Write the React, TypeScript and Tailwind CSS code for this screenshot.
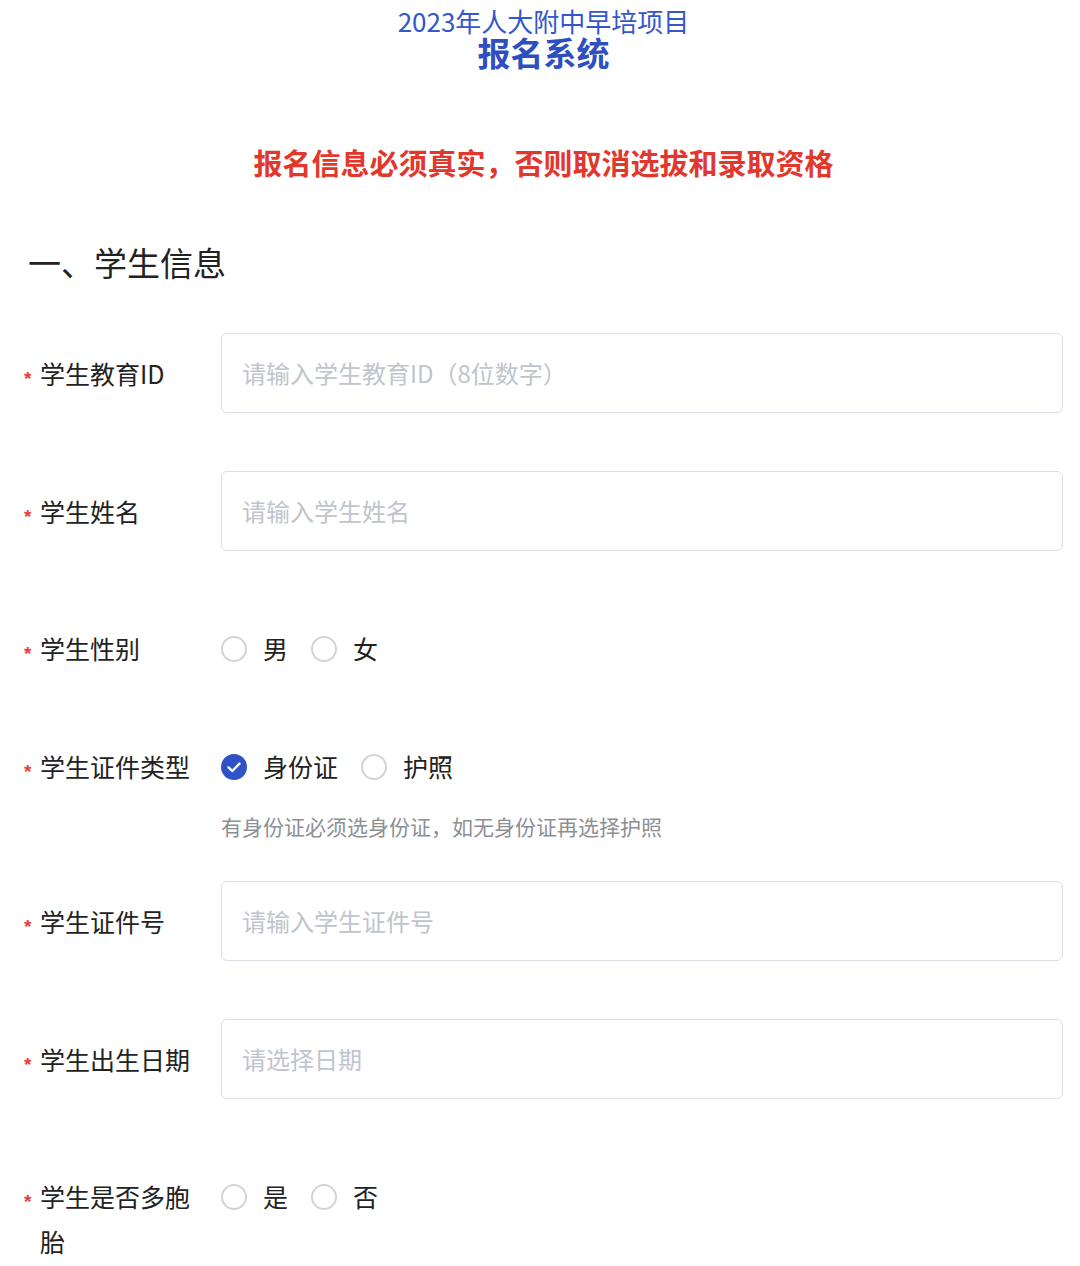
import React from "react";

const font = { fontFamily: '"Noto Sans CJK SC", "Noto Sans", sans-serif' };

function Star() {
  return (
    <span
      style={{ fontFamily: '"Liberation Sans", sans-serif' }}
      className="w-[16px] h-[45px] shrink-0 flex items-center text-[19px] font-bold text-[#e5403a] leading-none"
    >
      <span className="translate-y-[5px]">*</span>
    </span>
  );
}

function Label({ text }: { text: string }) {
  return (
    <div className="flex items-start shrink-0">
      <Star />
      <div className="w-[160px] mr-[21px] text-[25px] leading-[45px] text-[#222]">{text}</div>
    </div>
  );
}

function InputRow({ label, placeholder, mt }: { label: string; placeholder: string; mt: string }) {
  return (
    <div className={`flex items-center ${mt}`}>
      <Label text={label} />
      <div className="flex-1 h-[80px] border border-[#dcdfe6] rounded-[6px] flex items-center pl-[20px] text-[24px] text-[#c0c4cc]">
        {placeholder}
      </div>
    </div>
  );
}

function Radio({ label, checked }: { label: string; checked?: boolean }) {
  return (
    <div className="flex items-center mr-[23px]">
      {checked ? (
        <svg width="26" height="26" viewBox="0 0 26 26">
          <circle cx="13" cy="13" r="13" fill="#2f52c6" />
          <path d="M7.5 13.4l3.8 3.6 7.2-7.4" fill="none" stroke="#fff" strokeWidth="2.4" strokeLinecap="round" strokeLinejoin="round" />
        </svg>
      ) : (
        <span className="w-[26px] h-[26px] rounded-full border-[2px] border-[#d4d4d6] box-border" />
      )}
      <span className="ml-[16px] text-[25px] leading-[45px] text-[#222]">{label}</span>
    </div>
  );
}

function RadioRow({ label, options, mt }: { label: string; options: { t: string; c?: boolean }[]; mt: string }) {
  return (
    <div className={`flex items-start ${mt}`}>
      <Label text={label} />
      <div className="flex items-center h-[45px]">
        {options.map((o) => (
          <Radio key={o.t} label={o.t} checked={o.c} />
        ))}
      </div>
    </div>
  );
}

export default function App() {
  return (
    <div style={font} className="w-[1080px] h-[1266px] bg-white overflow-hidden pl-[24px] pr-[17px]">
      <div className="pt-[7px] text-center">
        <div className="text-[26px] leading-[28px] text-[#3457c9]">2023年人大附中早培项目</div>
        <div className="mt-[1px] text-[33px] leading-[32px] font-bold text-[#2d4fbf]">报名系统</div>
      </div>
      <div className="mt-[74px] text-center text-[29px] leading-[40px] font-bold text-[#e2372d]">
        报名信息必须真实，否则取消选拔和录取资格
      </div>
      <div className="mt-[60px] pl-[4px] text-[33px] leading-[40px] text-[#222]">一、学生信息</div>

      <InputRow mt="mt-[51px]" label="学生教育ID" placeholder="请输入学生教育ID（8位数字）" />
      <InputRow mt="mt-[58px]" label="学生姓名" placeholder="请输入学生姓名" />
      <RadioRow mt="mt-[75px]" label="学生性别" options={[{ t: "男" }, { t: "女" }]} />
      <RadioRow mt="mt-[73px]" label="学生证件类型" options={[{ t: "身份证", c: true }, { t: "护照" }]} />
      <div className="mt-[22px] ml-[197px] text-[21px] leading-[30px] text-[#8d8f94]">
        有身份证必须选身份证，如无身份证再选择护照
      </div>
      <InputRow mt="mt-[40px]" label="学生证件号" placeholder="请输入学生证件号" />
      <InputRow mt="mt-[58px]" label="学生出生日期" placeholder="请选择日期" />
      <RadioRow mt="mt-[75px]" label="学生是否多胞胎" options={[{ t: "是" }, { t: "否" }]} />
    </div>
  );
}
